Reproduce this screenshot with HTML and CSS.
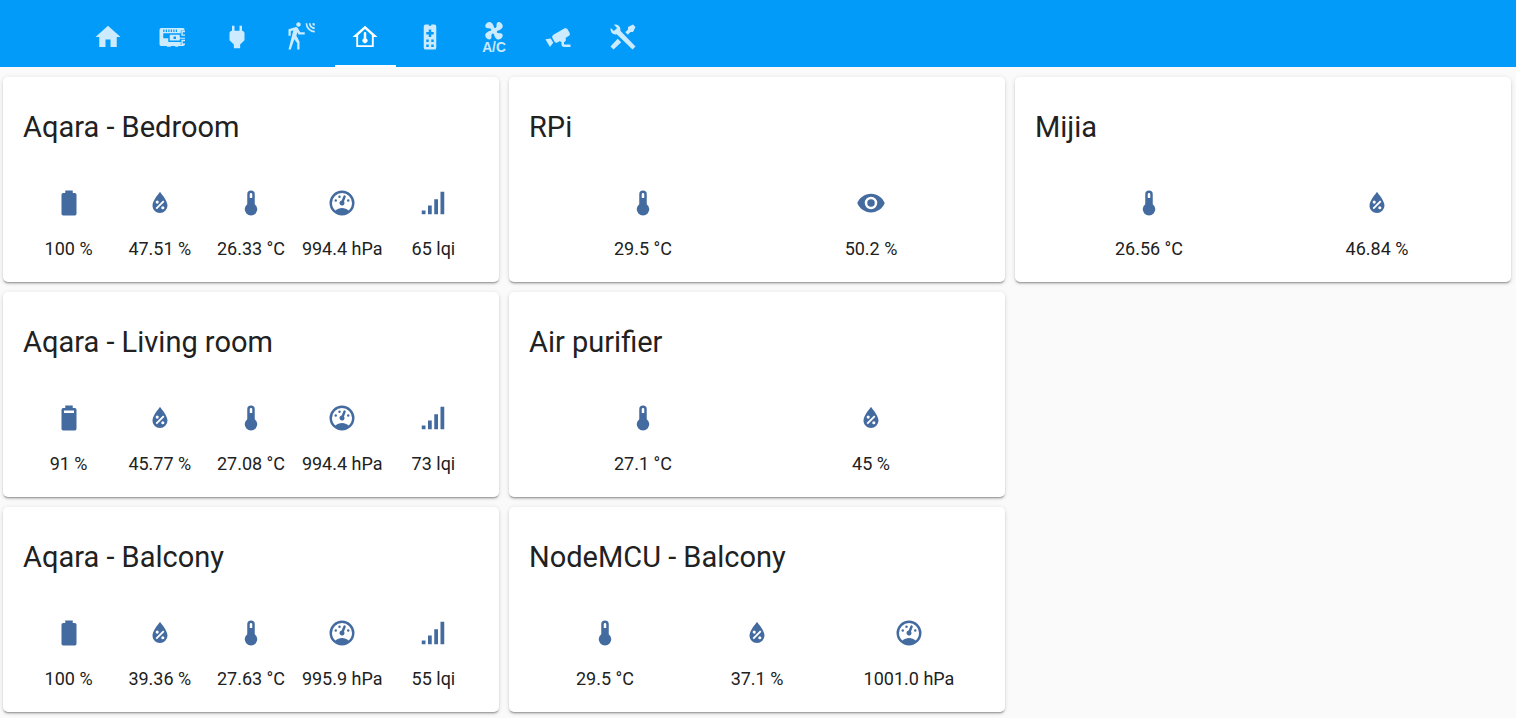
FILE: index.html
```html
<!DOCTYPE html>
<html lang="en">
<head>
<meta charset="utf-8">
<title>Home sensors</title>
<link rel="stylesheet" href="styles.css">
</head>
<body>
<svg class="sprite" aria-hidden="true">
  <symbol id="battery" viewBox="0 0 24 24"><path d="M16.67,4H15V2H9V4H7.33A1.33,1.33 0 0,0 6,5.33V20.67C6,21.4 6.6,22 7.33,22H16.67A1.33,1.33 0 0,0 18,20.67V5.33C18,4.6 17.4,4 16.67,4Z"/></symbol>
  <symbol id="battery-90" viewBox="0 0 24 24"><path fill-rule="evenodd" d="M16,8H8V6H16V8ZM16.67,4H15V2H9V4H7.33A1.33,1.33 0 0,0 6,5.33V20.67C6,21.4 6.6,22 7.33,22H16.67A1.33,1.33 0 0,0 18,20.67V5.33C18,4.6 17.4,4 16.67,4Z"/></symbol>
  <symbol id="humidity" viewBox="0 0 24 24"><path fill-rule="evenodd" d="M12,3.25C12,3.25 6,10 6,14C6,17.32 8.69,20 12,20A6,6 0 0,0 18,14C18,10 12,3.25 12,3.25M14.47,9.97L15.53,11.03L9.53,17.03L8.47,15.97M9.75,10A1.25,1.25 0 0,1 11,11.25A1.25,1.25 0 0,1 9.75,12.5A1.25,1.25 0 0,1 8.5,11.25A1.25,1.25 0 0,1 9.75,10M14.25,14.5A1.25,1.25 0 0,1 15.5,15.75A1.25,1.25 0 0,1 14.25,17A1.25,1.25 0 0,1 13,15.75A1.25,1.25 0 0,1 14.25,14.5Z"/></symbol>
  <symbol id="thermometer" viewBox="0 0 24 24"><path fill-rule="evenodd" d="M15,13V5A3,3 0 0,0 9,5V13A5,5 0 1,0 15,13M12,4A1,1 0 0,1 13,5V8H11V5A1,1 0 0,1 12,4Z"/></symbol>
  <symbol id="gauge" viewBox="0 0 24 24"><path d="M12,2A10,10 0 0,0 2,12A10,10 0 0,0 12,22A10,10 0 0,0 22,12A10,10 0 0,0 12,2M12,4A8,8 0 0,1 20,12C20,14.4 19,16.5 17.3,18C15.9,16.7 14,16 12,16C10,16 8.2,16.7 6.7,18C5,16.5 4,14.4 4,12A8,8 0 0,1 12,4M14,5.89C13.62,5.9 13.26,6.15 13.1,6.54L11.81,9.77L11.71,10C11,10.13 10.41,10.6 10.14,11.26C9.73,12.29 10.23,13.45 11.26,13.86C12.29,14.27 13.45,13.77 13.86,12.74C14.12,12.08 14,11.32 13.57,10.76L13.67,10.5L14.96,7.29L14.97,7.26C15.17,6.75 14.92,6.17 14.41,5.96C14.28,5.91 14.15,5.89 14,5.89M10,6A1,1 0 0,0 9,7A1,1 0 0,0 10,8A1,1 0 0,0 11,7A1,1 0 0,0 10,6M7,9A1,1 0 0,0 6,10A1,1 0 0,0 7,11A1,1 0 0,0 8,10A1,1 0 0,0 7,9M17,9A1,1 0 0,0 16,10A1,1 0 0,0 17,11A1,1 0 0,0 18,10A1,1 0 0,0 17,9Z"/></symbol>
  <symbol id="signal" viewBox="0 0 24 24"><path d="M3,21H6V18H3M8,21H11V14H8M13,21H16V9H13M18,21H21V3H18V21Z"/></symbol>
  <symbol id="eye" viewBox="0 0 24 24"><path fill-rule="evenodd" d="M12,9A3,3 0 0,0 9,12A3,3 0 0,0 12,15A3,3 0 0,0 15,12A3,3 0 0,0 12,9M12,17A5,5 0 0,1 7,12A5,5 0 0,1 12,7A5,5 0 0,1 17,12A5,5 0 0,1 12,17M12,4.5C7,4.5 2.73,7.61 1,12C2.73,16.39 7,19.5 12,19.5C17,19.5 21.27,16.39 23,12C21.27,7.61 17,4.5 12,4.5Z"/></symbol>
</svg>

<header class="toolbar">
  <nav class="tabs" aria-label="Views">
    <a class="tab" href="#home" aria-label="Home"><svg class="icon" viewBox="0 0 24 24"><path d="M10,20V14H14V20H19V12H22L12,3L2,12H5V20H10Z"/></svg></a>
    <a class="tab" href="#board" aria-label="Board"><svg class="icon" viewBox="0 0 24 24"><path fill-rule="evenodd" d="M3.5,4.8H20.8A1.2,1.2 0 0,1 22,6V6.8H19V9H9V14.2V16H19V18.4H22A1.2,1.2 0 0,1 20.8,19.2H17V19.8H14.5V19.2H11V19.8H8V19.2H3.5A1.5,1.5 0 0,1 2,17.7V6.3A1.5,1.5 0 0,1 3.5,4.8M5,6V8H6V6M7,6V8H8V6M9,6V8H10V6M11,6V8H12V6M13,6V8H14V6M15,6V8H16V6M5,9V13H9V9"/><path fill-rule="evenodd" d="M10.2,10.2H18.2V12.5H22.4V13.3H18.2V14.8H10.2ZM13.2,11.5V13.5H15.2V11.5ZM19.5,7H22.4V11H19.5ZM20.6,8.2V9.9H22.4V8.2ZM19.5,14.2H22.4V18.4H19.5ZM20.6,15.4V17.1H22.4V15.4Z"/></svg></a>
    <a class="tab" href="#plugs" aria-label="Plugs"><svg class="icon" viewBox="0 0 24 24"><path d="M16,7V3H14V7H10V3H8V7C7,7 6,8 6,9V14.5L9.5,18V21H14.5V18L18,14.5V9C18,8 17,7 16,7Z"/></svg></a>
    <a class="tab" href="#motion" aria-label="Motion"><svg class="icon" viewBox="0 0 24 24"><path d="M10,0.2C9,0.2 8.2,1 8.2,2C8.2,3 9,3.8 10,3.8C11,3.8 11.8,3 11.8,2C11.8,1 11,0.2 10,0.2M15.67,1A7.33,7.33 0 0,0 23,8.33V7A6,6 0 0,1 17,1H15.67M18.33,1C18.33,3.58 20.42,5.67 23,5.67V4.33C21.16,4.33 19.67,2.84 19.67,1H18.33M21,1A2,2 0 0,0 23,3V1H21M7.92,4.03C7.75,4.03 7.58,4.06 7.42,4.11L2,5.8V11H3.8V7.33L5.91,6.67L2,22H3.8L6.67,13.89L9,17V22H10.8V15.59L8.31,11.05L9.04,8.18L10.12,10H15V8.2H11.38L9.38,4.87C9.08,4.37 8.54,4.03 7.92,4.03Z"/></svg></a>
    <a class="tab tab-active" href="#climate" aria-label="Climate" aria-current="page"><svg class="icon" viewBox="0 0 24 24"><path fill-rule="evenodd" d="M12,3L2,12H5V20H19V12H22L12,3M6.5,18.5V10.6L12,5.6L17.5,10.6V18.5H6.5M12,8A1,1 0 0,0 11,9V13.27A2,2 0 1,0 13,13.27V9A1,1 0 0,0 12,8Z"/></svg></a>
    <a class="tab" href="#remote" aria-label="Remote"><svg class="icon" viewBox="0 0 24 24"><path fill-rule="evenodd" d="M8.5,2H11V3H13V2H15.5A1.5,1.5 0 0,1 17,3.5V20.5A1.5,1.5 0 0,1 15.5,22H8.5A1.5,1.5 0 0,1 7,20.5V3.5A1.5,1.5 0 0,1 8.5,2M11,6V8H9V10H11V12H13V10H15V8H13V6M9,14V16H11V14M13,14V16H15V14M9,18V20H11V18M13,18V20H15V18Z"/></svg></a>
    <a class="tab" href="#ac" aria-label="A/C"><svg class="icon" viewBox="0 0 24 24"><path d="M6.59,0.66C8.93,-1.15 11.47,1.06 12.04,4.5C12.47,4.5 12.89,4.62 13.27,4.84C13.79,4.24 14.25,3.42 14.07,2.5C13.65,0.35 16.06,-1.39 18.35,1.58C20.16,3.92 17.95,6.46 14.5,7.03C14.5,7.46 14.39,7.89 14.16,8.27C14.76,8.78 15.58,9.24 16.5,9.06C18.63,8.64 20.38,11.04 17.41,13.34C15.07,15.15 12.53,12.94 11.96,9.5C11.53,9.5 11.11,9.37 10.74,9.15C10.22,9.75 9.75,10.58 9.93,11.5C10.35,13.64 7.94,15.39 5.65,12.42C3.83,10.07 6.05,7.53 9.5,6.97C9.5,6.54 9.63,6.12 9.85,5.74C9.25,5.23 8.43,4.76 7.5,4.94C5.37,5.36 3.62,2.96 6.59,0.66Z"/><text class="icon-label" x="12" y="24" text-anchor="middle">A/C</text></svg></a>
    <a class="tab" href="#cameras" aria-label="Cameras"><svg class="icon" viewBox="0 0 24 24"><path d="M18.15,4.94C17.77,4.91 17.37,5 17,5.2L8.35,10.2C7.39,10.76 7.07,12 7.62,12.94L9.12,15.53C9.67,16.5 10.89,16.82 11.85,16.27L13.65,15.23C13.92,15.69 14.32,16.06 14.81,16.27V18.04C14.81,19.13 15.7,20 16.81,20H22V18.04H16.81V16.27C17.72,15.87 18.31,14.97 18.31,14C18.31,13.54 18.19,13.11 17.97,12.73L20.5,11.27C21.47,10.71 21.8,9.5 21.24,8.53L19.74,5.94C19.4,5.34 18.79,5 18.15,4.94M6.22,13.17L2,13.87L2.75,15.17L4.75,18.63L5.5,19.93L8.22,16.63L6.22,13.17Z"/></svg></a>
    <a class="tab" href="#tools" aria-label="Tools"><svg class="icon" viewBox="0 0 24 24"><path d="M22,19.6L19.6,22L7,9.85A3.81,3.81 0 0,1 6,10A4,4 0 0,1 2.22,4.7L4.76,7.24L7.24,4.76L4.7,2.22A4,4 0 0,1 10,6A3.81,3.81 0 0,1 9.85,7L22,19.6M2,19.6L4.4,22L10.59,16.25L7.76,13.42M20,2L16,4V6L13.83,8.17L15.83,10.17L18,8H20L22,4Z"/></svg></a>
  </nav>
</header>

<main class="board">
  <div class="column">
    <section class="card">
      <h2 class="card-title">Aqara - Bedroom</h2>
      <div class="readings">
        <div class="reading"><svg class="icon"><use href="#battery"/></svg><span>100 %</span></div>
        <div class="reading"><svg class="icon"><use href="#humidity"/></svg><span>47.51 %</span></div>
        <div class="reading"><svg class="icon"><use href="#thermometer"/></svg><span>26.33 °C</span></div>
        <div class="reading"><svg class="icon"><use href="#gauge"/></svg><span>994.4 hPa</span></div>
        <div class="reading"><svg class="icon"><use href="#signal"/></svg><span>65 lqi</span></div>
      </div>
    </section>
    <section class="card">
      <h2 class="card-title">Aqara - Living room</h2>
      <div class="readings">
        <div class="reading"><svg class="icon"><use href="#battery-90"/></svg><span>91 %</span></div>
        <div class="reading"><svg class="icon"><use href="#humidity"/></svg><span>45.77 %</span></div>
        <div class="reading"><svg class="icon"><use href="#thermometer"/></svg><span>27.08 °C</span></div>
        <div class="reading"><svg class="icon"><use href="#gauge"/></svg><span>994.4 hPa</span></div>
        <div class="reading"><svg class="icon"><use href="#signal"/></svg><span>73 lqi</span></div>
      </div>
    </section>
    <section class="card">
      <h2 class="card-title">Aqara - Balcony</h2>
      <div class="readings">
        <div class="reading"><svg class="icon"><use href="#battery"/></svg><span>100 %</span></div>
        <div class="reading"><svg class="icon"><use href="#humidity"/></svg><span>39.36 %</span></div>
        <div class="reading"><svg class="icon"><use href="#thermometer"/></svg><span>27.63 °C</span></div>
        <div class="reading"><svg class="icon"><use href="#gauge"/></svg><span>995.9 hPa</span></div>
        <div class="reading"><svg class="icon"><use href="#signal"/></svg><span>55 lqi</span></div>
      </div>
    </section>
  </div>
  <div class="column">
    <section class="card">
      <h2 class="card-title">RPi</h2>
      <div class="readings">
        <div class="reading"><svg class="icon"><use href="#thermometer"/></svg><span>29.5 °C</span></div>
        <div class="reading"><svg class="icon"><use href="#eye"/></svg><span>50.2 %</span></div>
      </div>
    </section>
    <section class="card">
      <h2 class="card-title">Air purifier</h2>
      <div class="readings">
        <div class="reading"><svg class="icon"><use href="#thermometer"/></svg><span>27.1 °C</span></div>
        <div class="reading"><svg class="icon"><use href="#humidity"/></svg><span>45 %</span></div>
      </div>
    </section>
    <section class="card">
      <h2 class="card-title">NodeMCU - Balcony</h2>
      <div class="readings">
        <div class="reading"><svg class="icon"><use href="#thermometer"/></svg><span>29.5 °C</span></div>
        <div class="reading"><svg class="icon"><use href="#humidity"/></svg><span>37.1 %</span></div>
        <div class="reading"><svg class="icon"><use href="#gauge"/></svg><span>1001.0 hPa</span></div>
      </div>
    </section>
  </div>
  <div class="column">
    <section class="card">
      <h2 class="card-title">Mijia</h2>
      <div class="readings">
        <div class="reading"><svg class="icon"><use href="#thermometer"/></svg><span>26.56 °C</span></div>
        <div class="reading"><svg class="icon"><use href="#humidity"/></svg><span>46.84 %</span></div>
      </div>
    </section>
  </div>
</main>
</body>
</html>
```
FILE: styles.css
```css
* {
  box-sizing: border-box;
}

body {
  margin: 0;
  background: #fafafa;
  color: #212121;
  font-family: Roboto, "Noto Sans", sans-serif;
  font-size: 18px;
  line-height: 24px;
}

.sprite {
  display: none;
}

.icon {
  display: block;
  width: 30px;
  height: 30px;
  fill: currentColor;
  overflow: visible;
}

.icon-label {
  font: bold 11px "Liberation Sans", Arial, sans-serif;
}

.toolbar {
  background: #039bfa;
  padding-left: 76px;
}

.tabs {
  display: grid;
  grid-template-columns: repeat(9, 1fr);
  max-width: 579px;
}

.tab {
  display: flex;
  justify-content: center;
  margin: 0 2px;
  padding: 22px 0 13px;
  border-bottom: 2px solid transparent;
  color: rgba(255, 255, 255, 0.8);
}

.tab-active {
  border-bottom-color: #fff;
  color: #fff;
}

.board {
  display: grid;
  grid-template-columns: repeat(3, 1fr);
  align-items: start;
  gap: 10px;
  padding: 10px 5px 5px 3px;
}

.column {
  display: grid;
  gap: 10px;
}

.card {
  padding: 30px 20px 21px;
  border-radius: 5px;
  background: #fff;
  box-shadow: 0 2px 2px rgba(0, 0, 0, 0.14), 0 1px 5px rgba(0, 0, 0, 0.12), 0 2px 1px -1px rgba(0, 0, 0, 0.2);
}

.card-title {
  margin: 0 0 41px;
  font-size: 29px;
  font-weight: 400;
  line-height: 40px;
}

.readings {
  display: flex;
}

.reading {
  flex: 1 1 0;
  display: flex;
  flex-direction: column;
  align-items: center;
  gap: 19px;
  white-space: nowrap;
}

.reading .icon {
  color: #446ba0;
}
```
